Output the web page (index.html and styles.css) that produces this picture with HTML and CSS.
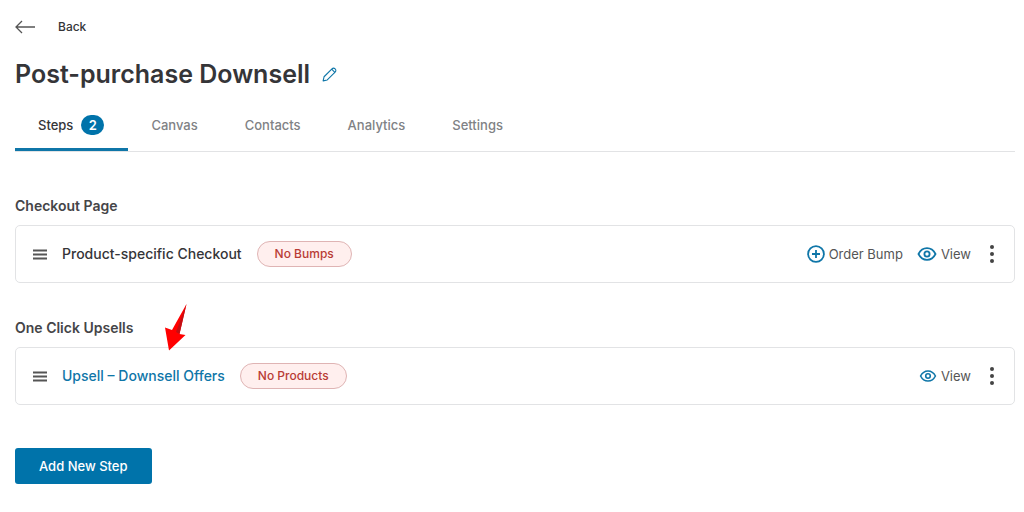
FILE: index.html
```
<!DOCTYPE html>
<html lang="en">
<head>
    <meta charset="UTF-8">
    <meta name="viewport" content="width=device-width, initial-scale=1.0">
    <title>Post-purchase Downsell</title>
    <link rel="stylesheet" href="styles.css">
</head>
<body>
    <svg class="sprite" width="0" height="0" aria-hidden="true">
        <symbol id="icon-eye" viewBox="0 0 20 16">
            <path d="M1.5 8C3.4 4.3 6.4 2.2 10 2.2S16.6 4.3 18.5 8C16.6 11.7 13.6 13.8 10 13.8S3.4 11.7 1.5 8Z"/>
            <circle cx="10" cy="8" r="2.6"/>
        </symbol>
        <symbol id="icon-drag" viewBox="0 0 14 11">
            <path d="M0 1.5h14M0 5.5h14M0 9.5h14"/>
        </symbol>
        <symbol id="icon-more" viewBox="0 0 6 20">
            <circle cx="3" cy="3" r="2"/>
            <circle cx="3" cy="10" r="2"/>
            <circle cx="3" cy="17" r="2"/>
        </symbol>
    </svg>

    <div class="container">
        <a class="back" href="#">
            <svg class="back-icon" width="20" height="14" viewBox="0 0 20 14" aria-hidden="true">
                <path d="M20 7H1M7 1L1 7l6 6"/>
            </svg>
            Back
        </a>

        <div class="title">
            <h1>Post-purchase Downsell</h1>
            <button type="button" class="icon-button" aria-label="Edit title">
                <svg class="edit-icon" width="15" height="15" viewBox="0 0 16 16" aria-hidden="true">
                    <path d="M1.2 14.8L2.2 10.4L10.6 2C11.6 1 13 1 14 2S15 4.4 14 5.4L5.6 13.8ZM10.3 2.3l3.4 3.4"/>
                </svg>
            </button>
        </div>

        <nav class="tabs">
            <a class="tab active" href="#steps">Steps <span class="count">2</span></a>
            <a class="tab" href="#canvas">Canvas</a>
            <a class="tab" href="#contacts">Contacts</a>
            <a class="tab" href="#analytics">Analytics</a>
            <a class="tab" href="#settings">Settings</a>
        </nav>

        <section class="group">
            <h2>Checkout Page</h2>
            <div class="step">
                <svg class="drag-icon" width="14" height="11" aria-hidden="true"><use href="#icon-drag"/></svg>
                <a class="step-name" href="#checkout">Product-specific Checkout</a>
                <span class="tag">No Bumps</span>
                <div class="actions">
                    <button type="button" class="action">
                        <svg class="action-icon" width="18" height="18" viewBox="0 0 18 18" aria-hidden="true">
                            <circle cx="9" cy="9" r="7.9"/>
                            <path d="M9 5v8M5 9h8"/>
                        </svg>
                        Order Bump
                    </button>
                    <a class="action" href="#view-checkout">
                        <svg class="action-icon" width="20" height="16" aria-hidden="true"><use href="#icon-eye"/></svg>
                        View
                    </a>
                    <button type="button" class="icon-button more" aria-label="More options">
                        <svg width="6" height="20" aria-hidden="true"><use href="#icon-more"/></svg>
                    </button>
                </div>
            </div>
        </section>

        <section class="group">
            <h2>One Click Upsells</h2>
            <!-- arrow that points at the upsell step -->
            <svg class="pointer" width="24" height="49" viewBox="0 0 24 49" aria-hidden="true">
                <path class="pointer-body" d="M22.5 1L8 27L1 24.5L5 47.5L21.5 32L15.5 31Z"/>
                <path class="pointer-shade" d="M22.5 1L12 29L15.5 31Z"/>
            </svg>
            <div class="step">
                <svg class="drag-icon" width="14" height="11" aria-hidden="true"><use href="#icon-drag"/></svg>
                <a class="step-name current" href="#upsell">Upsell – Downsell Offers</a>
                <span class="tag">No Products</span>
                <div class="actions">
                    <a class="action" href="#view-upsell">
                        <svg class="action-icon" width="18" height="14" aria-hidden="true"><use href="#icon-eye"/></svg>
                        View
                    </a>
                    <button type="button" class="icon-button more" aria-label="More options">
                        <svg width="6" height="20" aria-hidden="true"><use href="#icon-more"/></svg>
                    </button>
                </div>
            </div>
        </section>

        <button type="button" class="add-step">Add New Step</button>
    </div>
</body>
</html>
```
FILE: styles.css
```
* {
    box-sizing: border-box;
}
body {
    margin: 0;
    background: #fff;
    color: #353538;
    font-family: Inter, "Liberation Sans", sans-serif;
    font-size: 13px;
    line-height: 20px;
}
a {
    color: inherit;
    text-decoration: none;
}
button {
    padding: 0;
    border: none;
    background: none;
    color: inherit;
    font: inherit;
    cursor: pointer;
}
svg {
    display: block;
    flex: none;
    fill: none;
}
h1, h2 {
    margin: 0;
}
.sprite {
    position: absolute;
}
.container {
    padding: 17px 9px 28px 15px;
}
.back {
    display: flex;
    align-items: center;
    gap: 23px;
    width: fit-content;
    font-size: 12px;
    font-weight: 500;
}
.back-icon {
    stroke: #555;
    stroke-width: 1.3;
}
.title {
    display: flex;
    align-items: center;
    gap: 12px;
    margin-top: 21px;
}
h1 {
    font-size: 25px;
    font-weight: 600;
    line-height: 32px;
}
.edit-icon {
    stroke: #0f76a8;
    stroke-width: 1.2;
    stroke-linejoin: round;
}
.tabs {
    display: flex;
    margin-top: 10px;
    border-bottom: 1px solid #e2e3e5;
}
.tab {
    display: flex;
    align-items: center;
    gap: 8px;
    height: 51px;
    padding: 2px 24px 0 23px;
    border-bottom: 3px solid transparent;
    color: #808285;
    font-weight: 500;
}
.tab.active {
    border-color: #0f76a8;
    color: #353538;
}
.count {
    min-width: 23px;
    border-radius: 10px;
    background: #0073aa;
    color: #fff;
    font-weight: 600;
    text-align: center;
}
.group {
    position: relative;
    margin-top: 35px;
}
.tabs + .group {
    margin-top: 44px;
}
h2 {
    margin-bottom: 9px;
    color: #454548;
    font-size: 14px;
    font-weight: 600;
}
.step {
    display: flex;
    align-items: center;
    min-height: 58px;
    padding: 0 15px 0 17px;
    border: 1px solid #e2e3e5;
    border-radius: 5px;
}
.drag-icon {
    stroke: #555;
    stroke-width: 2;
}
.step-name {
    margin: 0 15px;
    font-size: 14px;
    font-weight: 500;
}
.step-name.current {
    color: #0f76a8;
}
.tag {
    padding: 2px 17px;
    border: 1px solid #dfb4b4;
    border-radius: 13px;
    background: #ffefee;
    color: #b93c35;
    font-size: 12px;
    font-weight: 500;
}
.actions {
    display: flex;
    align-items: center;
    gap: 14px;
    margin-left: auto;
    color: #555;
}
.action {
    display: flex;
    align-items: center;
    gap: 4px;
}
.action-icon {
    stroke: #0f76a8;
    stroke-width: 1.8;
}
.more {
    padding: 0 4px;
}
.more svg {
    fill: #444;
}
.pointer {
    position: absolute;
    top: -15px;
    left: 149px;
}
.pointer-body {
    fill: #f00;
}
.pointer-shade {
    fill: #c20f14;
}
.add-step {
    margin-top: 43px;
    padding: 8px 24px;
    border-radius: 3px;
    background: #0073aa;
    color: #fff;
    font-weight: 500;
}
```
